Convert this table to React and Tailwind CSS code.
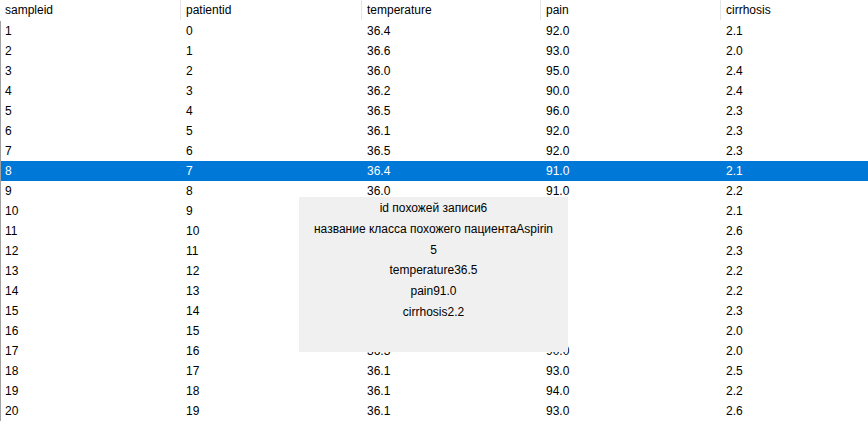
import React from "react"

// rows 10-16: temperature / pain sit under the popup, so they are left blank
const rows = [
    ["1", "0", "36.4", "92.0", "2.1"],
    ["2", "1", "36.6", "93.0", "2.0"],
    ["3", "2", "36.0", "95.0", "2.4"],
    ["4", "3", "36.2", "90.0", "2.4"],
    ["5", "4", "36.5", "96.0", "2.3"],
    ["6", "5", "36.1", "92.0", "2.3"],
    ["7", "6", "36.5", "92.0", "2.3"],
    ["8", "7", "36.4", "91.0", "2.1"],
    ["9", "8", "36.0", "91.0", "2.2"],
    ["10", "9", "", "", "2.1"],
    ["11", "10", "", "", "2.6"],
    ["12", "11", "", "", "2.3"],
    ["13", "12", "", "", "2.2"],
    ["14", "13", "", "", "2.2"],
    ["15", "14", "", "", "2.3"],
    ["16", "15", "", "", "2.0"],
    ["17", "16", "36.3", "90.0", "2.0"],
    ["18", "17", "36.1", "93.0", "2.5"],
    ["19", "18", "36.1", "94.0", "2.2"],
    ["20", "19", "36.1", "93.0", "2.6"],
]

const headers = ["sampleid", "patientid", "temperature", "pain", "cirrhosis"]
const widths = ["w-[180px]", "w-[181px]", "w-[179px]", "w-[180px]", "flex-1"]

function App() {
    const selected = 7

    return (
        <div
            className="relative w-[868px] h-[421px] overflow-hidden bg-white text-[12px] text-black"
            style={{ fontFamily: '"Liberation Sans", Arial, sans-serif' }}
        >
            {/* header */}
            <div className="flex h-[21px]">
                {headers.map((h, i) => (
                    <div
                        key={h}
                        className={`${widths[i]} flex items-center pl-[5px] ${i > 0 ? "border-l border-[#e5e5e5]" : ""} h-[20px]`}
                    >
                        {h}
                    </div>
                ))}
            </div>

            {/* body */}
            <div className="border-l border-[#a0a0a0]">
                {rows.map((r, ri) => (
                    <div
                        key={ri}
                        className={`flex h-[20px] items-center ${ri === selected ? "bg-[#0078d7] text-white" : ""}`}
                    >
                        {r.map((c, ci) => (
                            <div
                                key={ci}
                                className={`${ci === 0 ? "w-[179px] pl-[4px]" : widths[ci] + " pl-[6px]"}`}
                            >
                                {c}
                            </div>
                        ))}
                    </div>
                ))}
            </div>

            {/* popup */}
            <div className="absolute left-[299px] top-[197px] w-[269px] h-[155px] bg-[#f0f0f0] flex flex-col items-center pt-[1px] leading-[20.8px]">
                <p>id похожей записи6</p>
                <p>название класса похожего пациентаAspirin</p>
                <p>5</p>
                <p>temperature36.5</p>
                <p>pain91.0</p>
                <p>cirrhosis2.2</p>
            </div>
        </div>
    )
}

export default App
